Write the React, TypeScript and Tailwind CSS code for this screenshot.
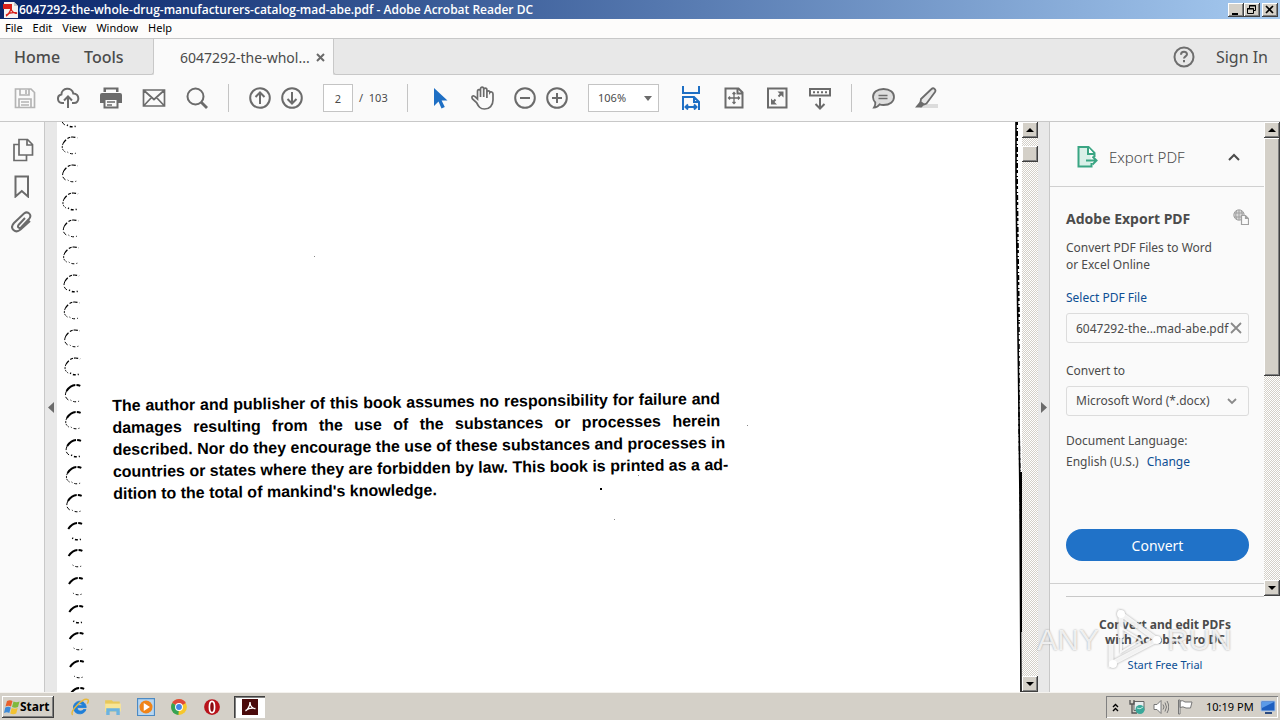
import { useState, type ReactNode } from "react";
import clsx from "clsx";

const menuItems = ["File", "Edit", "View", "Window", "Help"];

// top of every binding hole along the left side of the scan
const holes = [110, 137, 165, 193, 220, 247, 275, 302, 330, 358, 385, 412, 440, 467, 495, 523, 550, 578, 606, 633, 661, 688];

const paragraph = [
  "The author and publisher of this book assumes no responsibility for failure and",
  "damages resulting from the use of the substances or processes herein",
  "described. Nor do they encourage the use of these substances and processes in",
  "countries or states where they are forbidden by law. This book is printed as a ad-",
];

const raised =
  "bg-[#d4d0c8] shadow-[inset_-1px_-1px_0_#404040,inset_1px_1px_0_#ffffff,inset_-2px_-2px_0_#808080]";
const track =
  "bg-[repeating-conic-gradient(#d4d0c8_0_25%,#ffffff_0_50%)] bg-[length:2px_2px]";

function Icon({ children, size = 24, className }: { children: ReactNode; size?: number; className?: string }) {
  return (
    <svg
      width={size}
      height={size}
      viewBox="0 0 24 24"
      fill="none"
      stroke="currentColor"
      strokeWidth="2"
      className={clsx("shrink-0", className)}
      aria-hidden="true"
    >
      {children}
    </svg>
  );
}

function ToolButton({ label, narrow, className, children }: { label: string; narrow?: boolean; className?: string; children: ReactNode }) {
  return (
    <button
      type="button"
      aria-label={label}
      className={clsx("flex h-8 shrink-0 items-center justify-center", narrow ? "w-8" : "w-[43px]", className)}
    >
      <Icon>{children}</Icon>
    </button>
  );
}

function Divider() {
  return <div className="h-7 w-px shrink-0 bg-[#c4c4c4]" />;
}

function ScrollButton({ down }: { down?: boolean }) {
  return (
    <button
      type="button"
      aria-label={down ? "Scroll down" : "Scroll up"}
      className={clsx("flex h-4 w-4 shrink-0 items-center justify-center", raised)}
    >
      <svg width="8" height="4" viewBox="0 0 8 4" aria-hidden="true">
        <path d={down ? "M0 0h8L4 4z" : "M0 4h8L4 0z"} fill="#000" />
      </svg>
    </button>
  );
}

function TitleBar() {
  return (
    <header className="flex h-[19px] shrink-0 items-center bg-linear-to-r from-[#0a246a] to-[#a6caf0] pr-0.5 pl-[3px]">
      <svg width="16" height="16" viewBox="0 0 16 16" aria-hidden="true">
        <path d="M1 0h10l4 4v12H1z" fill="#f4f1f1" />
        <path d="M11 0v4h4" fill="#c8c8c8" />
        <path d="M0 2h9v5H0z" fill="#d8201a" />
        <path d="M3 14c2-1 5-5 5-8M8 6c0 3 3 6 6 5M3 13c3-2 7-3 11-2" fill="none" stroke="#d8201a" strokeWidth="1.4" />
      </svg>
      <h1 className="flex-1 truncate font-['Open_Sans','Noto_Sans',sans-serif] text-[12px] leading-4 font-semibold text-white">
        6047292-the-whole-drug-manufacturers-catalog-mad-abe.pdf - Adobe Acrobat Reader DC
      </h1>
      <div className="flex text-black">
        <button type="button" aria-label="Minimize" className={clsx("h-3.5 w-4", raised)}>
          <svg width="16" height="14" viewBox="0 0 16 14" aria-hidden="true">
            <path d="M4 10h6v2H4z" />
          </svg>
        </button>
        <button type="button" aria-label="Restore" className={clsx("mr-0.5 h-3.5 w-4", raised)}>
          <svg width="16" height="14" viewBox="0 0 16 14" fill="none" stroke="#000" aria-hidden="true">
            <path d="M5.500 5V2.500h6v5H10M5 3h7M3.500 5.500h6v5h-6zM3 6h7" />
          </svg>
        </button>
        <button type="button" aria-label="Close" className={clsx("h-3.5 w-4", raised)}>
          <svg width="16" height="14" viewBox="0 0 16 14" stroke="#000" strokeWidth="1.700" aria-hidden="true">
            <path d="M4 3l7 7M11 3l-7 7" />
          </svg>
        </button>
      </div>
    </header>
  );
}

function TabBar() {
  return (
    <div className="flex h-[37px] shrink-0 border-t border-[#c8c8c8] bg-[#e8e8e8] text-[16px] text-[#4b4b4b]">
      <div className="flex w-[154px] shrink-0 items-center gap-6 rounded-br-[3px] border-r border-b border-[#c8c8c8] pl-3.5 font-medium">
        <button type="button">Home</button>
        <button type="button">Tools</button>
      </div>
      <div className="flex w-[179px] shrink-0 items-center justify-between bg-[#fafafa] pr-2 pl-[26px]">
        <span className="text-[14px]">6047292-the-whol...</span>
        <button type="button" aria-label="Close tab">
          <svg width="9" height="9" viewBox="0 0 9 9" stroke="#6a6a6a" strokeWidth="2" aria-hidden="true">
            <path d="M1 1l7 7M8 1L1 8" />
          </svg>
        </button>
      </div>
      <div className="flex flex-1 items-center justify-end gap-5 rounded-bl-[3px] border-b border-l border-[#c8c8c8] pr-3">
        <button type="button" aria-label="Help" className="text-[#6e6e6e]">
          <Icon>
            <circle cx="12" cy="12" r="9.500" />
            <path d="M9 9.800c0-4 6-4 6-.5 0 2.200-3 2-3 4.200M12 15v2.200" />
          </Icon>
        </button>
        <button type="button">Sign In</button>
      </div>
    </div>
  );
}

function Toolbar() {
  const [page, setPage] = useState("2");

  return (
    <div className="flex h-[47px] shrink-0 items-center border-b border-[#c8c8c8] bg-[#fafafa] pl-[3px] text-[#6b6b6b]">
      {/* file actions */}
      <ToolButton label="Save" className="text-[#b4b4b4]">
        <path d="M2.500 3h15.500l3.500 3.500V21.500h-19zM7 3v6h9V3M13 4v4M6 21v-8h12v8M8 16h8M8 19h8" strokeWidth="1.700" />
      </ToolButton>
      <ToolButton label="Upload">
        <path d="M8 17H6a4.300 4.300 0 0 1-.6-8.500C5.500 1.500 16 .5 17.300 7.500c6.500 0 6.700 9.500.7 9.500h-2M12 22V11M8 14.500l4-4 4 4" />
      </ToolButton>
      <ToolButton label="Print">
        <path d="M4.500 1.500h15V6h-15z" fill="currentColor" stroke="none" />
        <path d="M7 3.500h10V6H7z" fill="#fafafa" stroke="none" />
        <path d="M3 7h18q2 0 2 2v8h-4v-4H5v4H1V9q0-2 2-2z" fill="currentColor" stroke="none" />
        <path d="M5.500 13v8.500h13V13z" fill="#fafafa" />
        <path d="M8 16h8M8 19h5" strokeWidth="1.500" />
      </ToolButton>
      <ToolButton label="Email">
        <path d="M1.500 4h21v16h-21zM2 4.500l10 9 10-9M2 19.500l7.500-8M22 19.500l-7.500-8" strokeWidth="1.700" />
      </ToolButton>
      <ToolButton label="Find">
        <circle cx="10.500" cy="10.500" r="8" />
        <path d="M16 16l6 6" strokeWidth="2.800" />
      </ToolButton>
      <div className="mr-[15px] ml-2.5">
        <Divider />
      </div>

      {/* page navigation */}
      <ToolButton label="Previous page" narrow>
        <circle cx="12" cy="12" r="9.800" />
        <path d="M12 18V7M7.500 11L12 6.500l4.500 4.500" />
      </ToolButton>
      <ToolButton label="Next page" narrow>
        <circle cx="12" cy="12" r="9.800" />
        <path d="M12 6v11M7.500 13l4.500 4.500 4.500-4.500" />
      </ToolButton>
      <input
        aria-label="Page number"
        value={page}
        onChange={(e) => setPage(e.target.value)}
        className="ml-[15px] h-7 w-[30px] border border-[#c4c4c4] bg-white text-center text-[11px] text-[#4b4b4b]"
      />
      <span className="w-[54px] shrink-0 pl-1.5 text-[11px] text-[#4b4b4b]">/&nbsp; 103</span>
      <Divider />

      {/* selection and zoom */}
      <div className="ml-2.5 flex">
        <ToolButton label="Select">
          <path d="M6 2v18l4.500-4.500 3 7 3.300-1.500-3.200-6.500H19.500z" fill="#1e6fc4" stroke="none" />
        </ToolButton>
        <ToolButton label="Pan">
          <path
            d="M6.500 13V5.500c0-2.400 3-2.400 3 0V11 3c0-2.500 3.200-2.500 3.200 0v8V4c0-2.400 3.200-2.400 3.200 0v8V6.500c0-2.300 3-2.300 3 0 .8-1 3.100-.7 3.100 1.500V14c0 5.500-3.500 9-8.500 9-4.500 0-6-2.500-8-6.500L1.500 13c-1.500-2.800.7-4 2.200-2.500z"
            strokeWidth="1.700"
          />
        </ToolButton>
      </div>
      <div className="ml-[5px] flex">
        <ToolButton label="Zoom out" narrow>
          <circle cx="12" cy="12" r="9.800" />
          <path d="M7 12h10" />
        </ToolButton>
        <ToolButton label="Zoom in" narrow>
          <circle cx="12" cy="12" r="9.800" />
          <path d="M7 12h10M12 7v10" />
        </ToolButton>
      </div>
      <div className="relative mr-2.5 ml-[15px] shrink-0">
        <select
          aria-label="Zoom level"
          defaultValue="106"
          className="h-7 w-[71px] appearance-none border border-[#c4c4c4] bg-white pl-[9px] text-[11px] text-[#4b4b4b]"
        >
          <option value="100">100%</option>
          <option value="106">106%</option>
        </select>
        <svg width="8" height="5" viewBox="0 0 8 5" className="pointer-events-none absolute top-3 right-[7px]" aria-hidden="true">
          <path d="M0 0h8L4 5z" fill="#6b6b6b" />
        </svg>
      </div>

      {/* page view */}
      <ToolButton label="Fit width" className="text-[#1e6fc4]">
        <path d="M4 0v7h16V0M4 24V11h11l5 5v8M15 11v5h5M6 21h12M9 18.500L6.500 21 9 23.500M15 18.500l2.500 2.500-2.500 2.500" />
      </ToolButton>
      <ToolButton label="Fit page">
        <path d="M3.500 2.500h13l4 4v15h-17zM15.500 3v4.500H20" />
        <path d="M12 6.500v11M6.500 12h11M10.500 8L12 6.500 13.500 8M10.500 16l1.500 1.500 1.500-1.500M8 10.500L6.500 12 8 13.500M16 10.500l1.500 1.500-1.500 1.500" strokeWidth="1.300" />
      </ToolButton>
      <ToolButton label="Full screen">
        <path d="M3 2.500h18.500v19H3z" />
        <path d="M12.500 5.500h6v6zM12 18.500H6v-6z" fill="currentColor" stroke="none" />
        <path d="M13.500 10.500l3-3M7.500 16.500l3-3" />
      </ToolButton>
      <ToolButton label="Read mode">
        <path d="M2 3h20v6.500H2zM12 12v10M7.500 18l4.500 4.500 4.500-4.500" />
        <path d="M5 6.200h15" strokeDasharray="2 2" />
      </ToolButton>
      <div className="mx-2.5">
        <Divider />
      </div>

      {/* comments */}
      <ToolButton label="Comment">
        <path d="M11.500 3C18 3 22 6.500 22 11s-4 8-10.500 8c-1.500 0-3-.2-4-.6C6 20.500 4 21.500 2 21.500c1-1.500 1.500-3 1.300-5C1.800 15 1 13 1 11c0-4.500 4-8 10.500-8z" fill="#dedede" strokeWidth="1.800" />
        <path d="M6.500 9.500h9M6.500 12.500h9" strokeWidth="1.500" />
      </ToolButton>
      <ToolButton label="Highlight">
        <path d="M7 18h16v4H5z" fill="#dcdcdc" stroke="none" />
        <path d="M6 13L16.500 3c2-2 5 .5 3.500 3l-8.500 11.500-2.500 1L5.500 16z" fill="#e8e8e8" strokeWidth="1.800" />
        <path d="M5 15.500L9 19l-2.500 2.500H0z" fill="currentColor" stroke="none" />
      </ToolButton>
    </div>
  );
}

function NavRail() {
  return (
    <nav className="flex w-[45px] shrink-0 flex-col items-center gap-3 border-r border-[#c8c8c8] bg-[#fafafa] pt-4 pl-0.5 text-[#6b6b6b]">
      <button type="button" aria-label="Page thumbnails">
        <Icon>
          <path d="M8 1.500h8.500l5 5V17H8zM16 2v5h5M8 6.500H3v16h12.500V17" strokeWidth="1.700" />
        </Icon>
      </button>
      <button type="button" aria-label="Bookmarks">
        <Icon>
          <path d="M4.500 2.500H17v20l-6.200-5.500-6.300 5.500z" />
        </Icon>
      </button>
      <button type="button" aria-label="Attachments">
        <Icon>
          <path d="M14 8l-6.500 7c-1.500 2 .7 3.800 2.500 2.500L18 9c3.500-4-1-8.500-5-5.500L3 13c-5 5.500 1.500 11 6.500 6.500l9.500-8.500" />
        </Icon>
      </button>
    </nav>
  );
}

function PaneHandle({ right }: { right?: boolean }) {
  return (
    <button
      type="button"
      aria-label={right ? "Hide tools pane" : "Show navigation pane"}
      className={clsx("flex shrink-0 items-center justify-center bg-[#e8e8e8]", right ? "w-[11px]" : "w-3")}
    >
      <svg width="6" height="11" viewBox="0 0 6 11" aria-hidden="true">
        <path d={right ? "M0 0v11l6-5.500z" : "M6 0v11L0 5.500z"} fill="#6b6b6b" />
      </svg>
    </button>
  );
}

function ScannedPage() {
  return (
    <main className="relative min-w-0 flex-1 overflow-hidden bg-white">
      {/* binding holes */}
      <svg width="40" height="570" viewBox="57 122 40 570" className="absolute top-0 left-0" fill="none" stroke="#000" aria-hidden="true">
        {holes.map((y, i) => {
          const x = 61 + i * 0.35;
          return (
            <g key={y}>
              <path
                d={`M${x + 2} ${y + 6}q4-6 9-6 3 0 5 1`}
                strokeWidth={i < 10 ? 1.2 : 2}
                strokeDasharray={i < 10 ? "4 2 3 1" : "11 1 4 1"}
              />
              {i < 15 && <path d={`M${x + 2} ${y + 6}q-3 6 2 9`} strokeWidth="1" strokeDasharray={i % 2 ? "2 1" : "4 2"} />}
              <path d={`M${x + 6} ${y + 15}q4 3 9 1`} strokeWidth={i % 3 ? 1 : 1.6} strokeDasharray="1 2 3 2" />
            </g>
          );
        })}
      </svg>
      {/* dark edge of the sheet */}
      <svg width="10" height="570" viewBox="0 0 10 570" className="absolute top-0 right-0" fill="none" stroke="#000" aria-hidden="true">
        <path d="M4 0v60l1 80 1.500 110 1.500 130 1 190" strokeWidth="1.600" />
        <path d="M5 0v60l1 80 1 60" strokeDasharray="3 3 1 2 5 2" strokeWidth="2" />
        <path d="M7 200v100l2 120" strokeDasharray="2 3 5 2 1 4" strokeWidth="1.500" />
        <path d="M9 350v160" strokeWidth="2" />
      </svg>
      {/* dust */}
      <svg width="500" height="280" viewBox="0 0 500 280" className="absolute top-[130px] left-[250px]" fill="#000" aria-hidden="true">
        <path d="M293 236h2v2h-2z" />
        <path d="M7 4h1v1H7zM440 173h1v1h-1zM307 267h1v1h-1zM331 223h1v1h-1z" fill="#888" />
      </svg>

      <p className="relative mt-[273px] ml-[55px] w-[608px] origin-top-left -rotate-[0.650deg] font-['Liberation_Sans',sans-serif] text-[16px] leading-[22px] font-bold whitespace-nowrap text-black">
        {paragraph.map((line) => (
          <span key={line} className="block [text-align-last:justify]">
            {line}
          </span>
        ))}
        <span className="block">dition to the total of mankind's knowledge.</span>
      </p>
    </main>
  );
}

function ExportPanel() {
  return (
    <section className="min-w-0 flex-1 bg-[#fafafa] text-[12px] text-[#4b4b4b]">
      <div className="flex h-[65px] items-center border-b border-[#d0d0d0] pt-1.5 pr-6 pl-[25px]">
        <Icon className="text-[#3aa583]">
          <path d="M14 2H3.500v19.500h13V18M13.500 2l6 6v4" fill="#d9f0e8" />
          <path d="M13 2v7h6" fill="#fff" />
          <path d="M11 15.500h10M17.500 11.500l4 4-4 4" />
        </Icon>
        <h2 className="ml-2.5 flex-1 text-[15px] font-light">Export PDF</h2>
        <button type="button" aria-label="Collapse">
          <svg width="12" height="8" viewBox="0 0 12 8" fill="none" stroke="#4b4b4b" strokeWidth="2" aria-hidden="true">
            <path d="M1 7l5-5 5 5" />
          </svg>
        </button>
      </div>
      <form className="flex flex-col pr-[15px] pl-4" onSubmit={(e) => e.preventDefault()}>
        <div className="mt-[22px] flex items-start justify-between">
          <h3 className="text-[14px] leading-5 font-bold">Adobe Export PDF</h3>
          <svg width="16" height="16" viewBox="0 0 16 16" fill="none" stroke="#a0a0a0" aria-hidden="true">
            <circle cx="6" cy="6" r="5.200" fill="#dadada" />
            <path d="M1 4h10M1 8h10M6 1v10M3.500 1.500q-1.500 4.500 0 9M8.500 1.500q1.500 4.500 0 9" />
            <path d="M8.500 6.500h4l3 3v6h-7zM12.500 6.500v3h3" fill="#fafafa" strokeWidth="1.200" />
          </svg>
        </div>
        <p className="mt-2.5 leading-[17px]">
          Convert PDF Files to Word
          <br />
          or Excel Online
        </p>
        <label htmlFor="pdf-file" className="mt-4 leading-[17px] text-[#0d4f94]">
          Select PDF File
        </label>
        <div className="relative mt-[7px]">
          <input
            id="pdf-file"
            readOnly
            value="6047292-the...mad-abe.pdf"
            className="h-[30px] w-full rounded-[3px] border border-[#dcdcdc] bg-[#fafafa] pl-[9px] text-[12px]"
          />
          <button type="button" aria-label="Clear file" className="absolute top-[9px] right-[7px]">
            <svg width="12" height="12" viewBox="0 0 12 12" stroke="#8a8a8a" strokeWidth="1.800" aria-hidden="true">
              <path d="M1 1l10 10M11 1L1 11" />
            </svg>
          </button>
        </div>
        <label htmlFor="format" className="mt-[19px] leading-[17px]">
          Convert to
        </label>
        <div className="relative mt-[7px]">
          <select
            id="format"
            className="h-[30px] w-full appearance-none rounded-[3px] border border-[#dcdcdc] bg-[#fafafa] pl-[9px] text-[12px]"
          >
            <option>Microsoft Word (*.docx)</option>
          </select>
          <svg width="10" height="7" viewBox="0 0 10 7" fill="none" stroke="#8a8a8a" strokeWidth="1.800" className="pointer-events-none absolute top-3 right-3" aria-hidden="true">
            <path d="M1 1l4 4 4-4" />
          </svg>
        </div>
        <p className="mt-3.5 leading-[21px]">
          Document Language:
          <br />
          English (U.S.)
          <a href="#language" className="ml-2 text-[#0d4f94]">
            Change
          </a>
        </p>
        <button type="submit" className="mt-[57px] h-8 rounded-full bg-[#2072c8] text-[14px] text-white">
          Convert
        </button>
      </form>
      <div className="mt-[22px] h-[13px] border-t border-[#d0d0d0]" />
    </section>
  );
}

function Watermark() {
  return (
    <div
      aria-hidden="true"
      className="pointer-events-none absolute right-12 bottom-5 flex items-center gap-1 font-['Liberation_Sans',sans-serif] text-[30px] leading-[60px] text-white/80 [text-shadow:0_0_2px_#9a9a9a]"
    >
      <span>ANY</span>
      <svg width="60" height="64" viewBox="0 0 60 64" fill="none" stroke="#fff" strokeOpacity="0.850" className="drop-shadow-[0_0_1px_#999999]">
        <path d="M18 30V6l36 26L8 56V36" strokeWidth="5" />
        <path d="M18 20l20 12-20 12z" strokeWidth="2" />
        <circle cx="18" cy="6" r="4" fill="#fff" stroke="none" />
        <circle cx="54" cy="32" r="4" fill="#fff" stroke="none" />
        <circle cx="10" cy="56" r="4" fill="#fff" stroke="none" />
      </svg>
      <span>RUN</span>
    </div>
  );
}

function ToolsPane() {
  return (
    <aside className="relative flex w-[231px] shrink-0 flex-col border-l border-[#c8c8c8] bg-[#fafafa]">
      <div className="flex">
        <ExportPanel />
        <div className={clsx("flex w-4 shrink-0 flex-col", track)}>
          <ScrollButton />
          <div className={clsx("h-[238px]", raised)} />
          <div className="flex-1" />
          <ScrollButton down />
        </div>
      </div>
      <div className="mr-4 ml-4 border-t border-[#c8c8c8]" />
      <div className="mt-5 text-center text-[12px] leading-[15px] text-[#4b4b4b]">
        <p className="font-bold">
          Convert and edit PDFs
          <br />
          with Acrobat Pro DC
        </p>
        <a href="#trial" className="mt-2.5 block text-[11px] text-[#0d4f94]">
          Start Free Trial
        </a>
      </div>
      <Watermark />
    </aside>
  );
}

function TaskIcon({ label, children }: { label: string; children: ReactNode }) {
  return (
    <button type="button" aria-label={label} className="flex w-[33px] items-center justify-center">
      <svg width="18" height="18" viewBox="0 0 16 16" aria-hidden="true">
        {children}
      </svg>
    </button>
  );
}

function Taskbar() {
  return (
    <footer className="flex h-7 shrink-0 items-stretch border-t border-[#f4f2ee] bg-[#d4d0c8] px-0.5 pt-[3px] pb-0.5 text-black">
      <button type="button" className={clsx("mr-[9px] flex w-[52px] items-center pl-0.5 text-[12px] font-bold", raised)}>
        <svg width="16" height="16" viewBox="0 0 16 16" aria-hidden="true">
          <path d="M3 2q3-1.500 5.500 0L7 7.500q-2.500-1.500-5.500 0z" fill="#e8602c" />
          <path d="M9.500 2.500q3 1.500 6 0L14 8q-3 1.500-6 0z" fill="#7fb93c" />
          <path d="M1.300 8.500q3-1.500 5.500 0L5.300 14Q3 12.500 0 14z" fill="#3d8ad8" />
          <path d="M7.700 9q3 1.500 6 0l-1.500 5.500q-3 1.500-6 0z" fill="#f2c231" />
        </svg>
        Start
      </button>
      <TaskIcon label="Internet Explorer">
        <path d="M13.500 8.500H5.500c0 3.500 4 4 5.500 1.800h2.300C11 16.500 1.800 14.500 2.200 8.300 2.500 1.500 13 .5 13.500 8.500zM5.700 6.800h4.500C10 4.500 6 4.500 5.700 6.800z" fill="#1f7fd8" stroke="#1f7fd8" strokeWidth="0.800" />
        <path d="M1.500 15C-1.500 12 11-1 15 1.500c1 .8 0 2.500-.5 3.500" fill="none" stroke="#e9b93a" strokeWidth="1.300" />
      </TaskIcon>
      <TaskIcon label="Explorer">
        <path d="M1 2h6l1 1h6v9H1z" fill="#e8c85a" />
        <path d="M1 5h14v7H1z" fill="#f8e596" />
        <path d="M2 15V9h12v6h-3v-3H5v3z" fill="#6bb3e0" />
      </TaskIcon>
      <TaskIcon label="Media Player">
        <path d="M.5.5h15v15H.5z" fill="#b8d6f0" stroke="#4b8ac4" />
        <circle cx="8" cy="8" r="5.800" fill="#f08418" />
        <path d="M6 4.500v7L11.500 8z" fill="#fff" />
      </TaskIcon>
      <TaskIcon label="Chrome">
        <circle cx="8" cy="8" r="7" fill="#f6c72c" />
        <path d="M8 8L1.900 4.500A7 7 0 0 1 14.100 4.500z" fill="#e04a3a" />
        <path d="M8 8L1.900 4.500A7 7 0 0 0 7.500 15z" fill="#35a354" />
        <circle cx="8" cy="8" r="3.500" fill="#fff" />
        <circle cx="8" cy="8" r="2.600" fill="#4285e8" />
      </TaskIcon>
      <TaskIcon label="Opera">
        <circle cx="8" cy="8" r="7" fill="#b8121a" />
        <ellipse cx="8" cy="8" rx="2.300" ry="5" fill="#8a0a10" stroke="#fff" strokeWidth="1.500" />
      </TaskIcon>
      <button
        type="button"
        aria-label="Adobe Acrobat Reader DC"
        className="ml-1.5 flex w-[31px] items-center justify-center bg-white shadow-[inset_1px_1px_0_#404040,inset_2px_2px_0_#808080,inset_-1px_-1px_0_#fff]"
      >
        <svg width="16" height="16" viewBox="0 0 16 16" aria-hidden="true">
          <path d="M0 0h16v16H0z" fill="#4a0a0a" />
          <path d="M3.500 12c2-1 4.500-5 4.500-9M8 3c0 4 2.500 7 5.500 6.500M3.500 11.500c3-2 6-3 9.500-2" fill="none" stroke="#fff" strokeWidth="1.300" />
        </svg>
      </button>

      <div className="ml-auto flex w-[172px] items-center shadow-[inset_1px_1px_0_#808080,inset_-1px_-1px_0_#fff]">
        <button type="button" aria-label="Show hidden icons" className="ml-1.5">
          <svg width="7" height="9" viewBox="0 0 7 9" fill="none" stroke="#000" strokeWidth="1.400" aria-hidden="true">
            <path d="M1 4l2.500-2.500L6 4M1 8l2.500-2.500L6 8" />
          </svg>
        </button>
        <svg width="16" height="16" viewBox="0 0 16 16" className="ml-2.5" aria-hidden="true">
          <path d="M5 2.500h10v9H5z" fill="#e8eef0" stroke="#666" />
          <path d="M1 1v4h4V1M3 5v9h5" fill="none" stroke="#555" strokeWidth="1.300" />
          <circle cx="11" cy="10.500" r="4.500" fill="#3aa89a" />
          <path d="M8 9q3 2 6-1" stroke="#bfe8e0" fill="none" />
        </svg>
        <svg width="16" height="16" viewBox="0 0 16 16" className="ml-2" fill="none" stroke="#777" aria-hidden="true">
          <path d="M1 5.500h3l4-4v13l-4-4H1z" fill="#fff" />
          <path d="M10 5.500q2 2.500 0 5M12 3.500q3 4.500 0 9M14 2q3.500 6 0 12" />
        </svg>
        <svg width="16" height="16" viewBox="0 0 16 16" className="ml-2" fill="#fff" stroke="#777" aria-hidden="true">
          <path d="M1.500 1h1.500v14H1.500zM3 2q3-1 5 1h7l-1.500 6H9Q6 7 3 8.500z" />
        </svg>
        <time className="ml-[13px] flex-1 text-[11px]">10:19 PM</time>
        <svg width="16" height="16" viewBox="0 0 16 16" className="mr-0.5" aria-hidden="true">
          <path d="M1 2h14v10H1z" fill="#1d5fc0" stroke="#a8c4e8" />
          <path d="M2 3h12L2 9z" fill="#5a9ae8" />
          <path d="M5 13h7v2H5z" fill="#2a4a80" />
        </svg>
      </div>
    </footer>
  );
}

export default function App() {
  return (
    <div className="flex h-screen flex-col overflow-hidden bg-[#fafafa] font-['Noto_Sans',sans-serif]">
      <TitleBar />
      <div className="flex h-[19px] shrink-0 items-center gap-2.5 bg-[#fdfcfb] pl-[5px] text-[11px] text-black">
        {menuItems.map((item) => (
          <button key={item} type="button">
            {item}
          </button>
        ))}
      </div>
      <TabBar />
      <Toolbar />
      <div className="flex min-h-0 flex-1">
        <NavRail />
        <PaneHandle />
        <ScannedPage />
        <div className={clsx("flex w-4 shrink-0 flex-col", track)}>
          <ScrollButton />
          <div className={clsx("mt-2 h-4", raised)} />
          <div className="flex-1" />
          <ScrollButton down />
        </div>
        <PaneHandle right />
        <ToolsPane />
      </div>
      <Taskbar />
    </div>
  );
}
